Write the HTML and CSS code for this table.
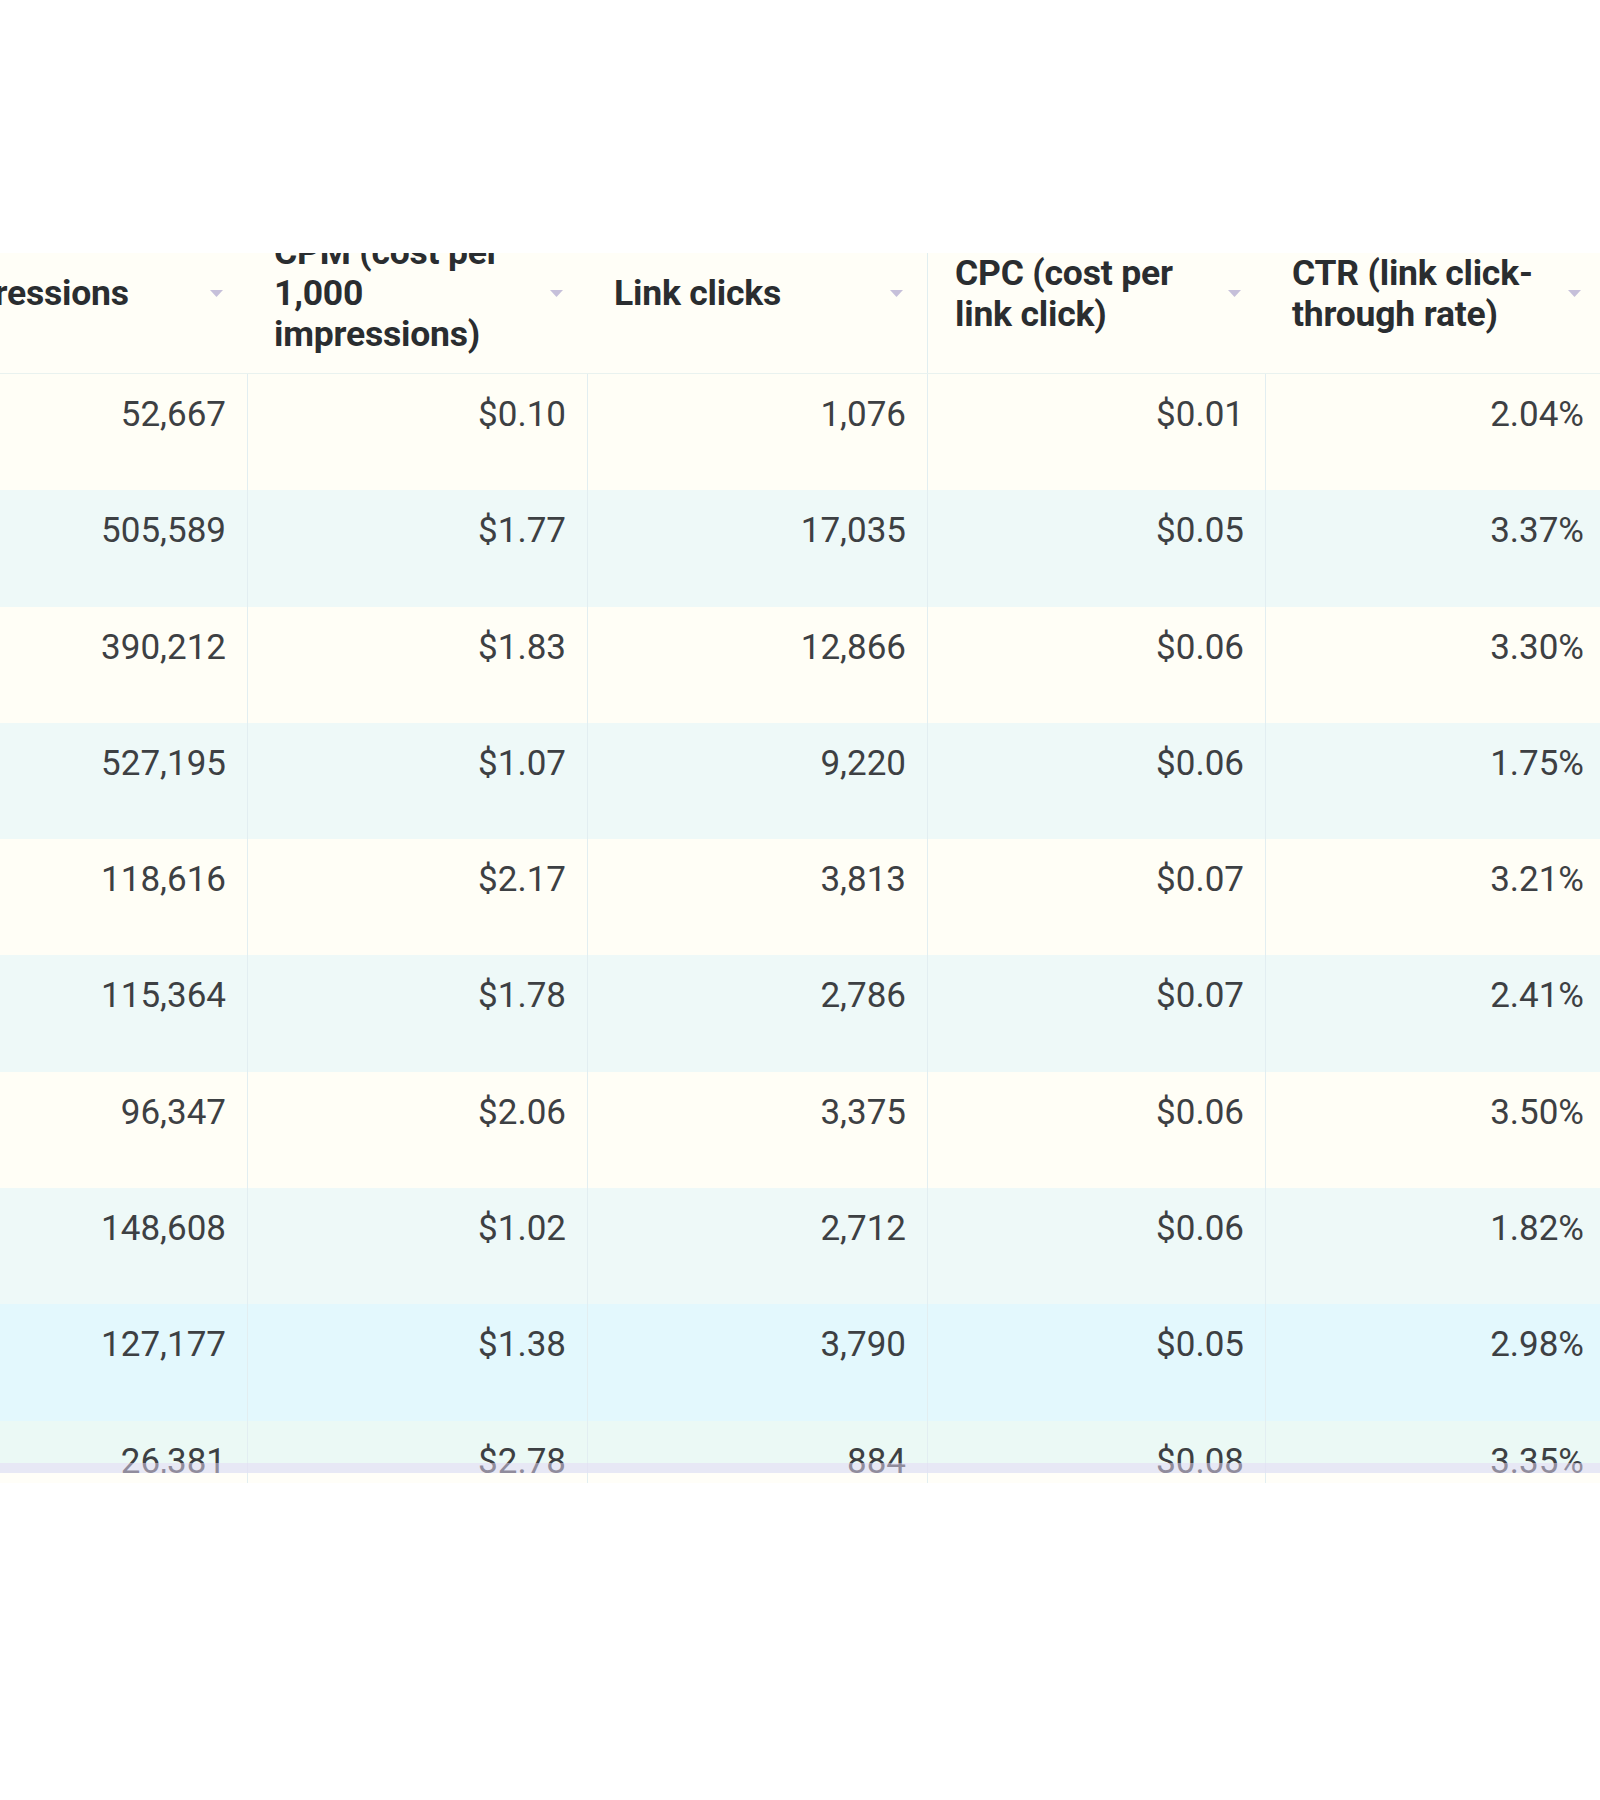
FILE: index.html
```html
<!DOCTYPE html>
<html lang="en">
<head>
<meta charset="utf-8">
<title>Ad metrics table</title>
<link rel="stylesheet" href="styles.css">
</head>
<body>
<div class="sheet">
  <div class="scroller">
    <div class="head grid">
      <div class="hcell"><span class="htxt">Impressions</span><svg class="arrow" viewBox="0 0 13 7"><path d="M0 0H13L6.5 7Z"/></svg></div>
      <div class="hcell"><span class="htxt">CPM (cost per<br>1,000<br>impressions)</span><svg class="arrow" viewBox="0 0 13 7"><path d="M0 0H13L6.5 7Z"/></svg></div>
      <div class="hcell"><span class="htxt">Link clicks</span><svg class="arrow" viewBox="0 0 13 7"><path d="M0 0H13L6.5 7Z"/></svg></div>
      <div class="hcell divided"><span class="htxt">CPC (cost per<br>link click)</span><svg class="arrow" viewBox="0 0 13 7"><path d="M0 0H13L6.5 7Z"/></svg></div>
      <div class="hcell"><span class="htxt">CTR (link click-<br>through rate)</span><svg class="arrow" viewBox="0 0 13 7"><path d="M0 0H13L6.5 7Z"/></svg></div>
    </div>
    <div class="body">
      <div class="row grid cream"><div class="cell">52,667</div><div class="cell">$0.10</div><div class="cell">1,076</div><div class="cell">$0.01</div><div class="cell">2.04%</div></div>
      <div class="row grid teal"><div class="cell">505,589</div><div class="cell">$1.77</div><div class="cell">17,035</div><div class="cell">$0.05</div><div class="cell">3.37%</div></div>
      <div class="row grid cream"><div class="cell">390,212</div><div class="cell">$1.83</div><div class="cell">12,866</div><div class="cell">$0.06</div><div class="cell">3.30%</div></div>
      <div class="row grid teal"><div class="cell">527,195</div><div class="cell">$1.07</div><div class="cell">9,220</div><div class="cell">$0.06</div><div class="cell">1.75%</div></div>
      <div class="row grid cream"><div class="cell">118,616</div><div class="cell">$2.17</div><div class="cell">3,813</div><div class="cell">$0.07</div><div class="cell">3.21%</div></div>
      <div class="row grid teal"><div class="cell">115,364</div><div class="cell">$1.78</div><div class="cell">2,786</div><div class="cell">$0.07</div><div class="cell">2.41%</div></div>
      <div class="row grid cream"><div class="cell">96,347</div><div class="cell">$2.06</div><div class="cell">3,375</div><div class="cell">$0.06</div><div class="cell">3.50%</div></div>
      <div class="row grid teal"><div class="cell">148,608</div><div class="cell">$1.02</div><div class="cell">2,712</div><div class="cell">$0.06</div><div class="cell">1.82%</div></div>
      <div class="row grid hover"><div class="cell">127,177</div><div class="cell">$1.38</div><div class="cell">3,790</div><div class="cell">$0.05</div><div class="cell">2.98%</div></div>
      <div class="row grid mint"><div class="cell">26,381</div><div class="cell">$2.78</div><div class="cell">884</div><div class="cell">$0.08</div><div class="cell">3.35%</div></div>
    </div>
    <div class="foot grid"><div class="fcell"></div><div class="fcell"></div><div class="fcell"></div><div class="fcell"></div><div class="fcell"></div></div>
  </div>
</div>
</body>
</html>
```

FILE: styles.css
```css
html, body {
  margin: 0;
  padding: 0;
  background: #ffffff;
}

body {
  font-family: Roboto, "Liberation Sans", Arial, sans-serif;
  color: #3f4245;
}

.sheet {
  margin-top: 253px;
  width: 1600px;
  overflow: hidden;
}

.scroller {
  margin-left: -93px;
  width: 1698px;
}

.grid {
  display: grid;
  grid-template-columns: 340px 340px 340px 338px 340px;
}

.head {
  margin-top: -39px;
  height: 160px;
  background: #fffef7;
  border-bottom: 1px solid #e9f2ef;
  box-sizing: border-box;
}

.hcell {
  display: flex;
  align-items: center;
  justify-content: space-between;
  padding: 0 24px 0 27px;
  font-size: 35.5px;
  line-height: 41px;
  font-weight: 700;
  letter-spacing: -0.2px;
  color: #2a2d30;
}

.hcell.divided {
  border-left: 1px solid #e1eef0;
}

.arrow {
  width: 13px;
  height: 7px;
  flex: none;
  fill: #c6c0da;
}

.body {
  position: relative;
  height: 1099px;
  overflow: hidden;
}

.body::after {
  content: "";
  position: absolute;
  left: 0;
  right: 0;
  bottom: 0;
  height: 10px;
  background: rgba(228, 216, 245, 0.5);
}

.row {
  height: 116.3px;
}

.cell {
  padding: 21px 21px 0 0;
  text-align: right;
  font-size: 35px;
  line-height: 40px;
  color: #3d4043;
}

.cell + .cell {
  border-left: 1px solid #e2eef1;
}

.cream { background: #fffef6; }
.teal { background: #eef9f8; }
.hover { background: #e3f8fd; }
.mint { background: #ebf9f5; }

.foot {
  height: 10px;
  background: #fffef8;
}

.fcell + .fcell {
  border-left: 1px solid #e2eef1;
}
```
